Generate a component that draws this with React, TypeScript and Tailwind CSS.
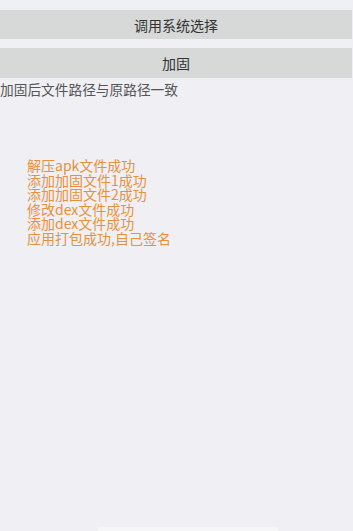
import React from "react";

const logs = [
  "解压apk文件成功",
  "添加加固文件1成功",
  "添加加固文件2成功",
  "修改dex文件成功",
  "添加dex文件成功",
  "应用打包成功,自己签名",
];

const App = () => {
  return (
    <div
      className="relative w-[353px] h-[531px] overflow-hidden bg-[#efeff4]"
      style={{ fontFamily: '"Noto Sans CJK SC", "Noto Sans", sans-serif' }}
    >
      {/* buttons */}
      <div className="flex flex-col gap-[9px] pt-[10px] pr-[1px]">
        <button className="h-[29px] w-full bg-[#d7d8d8] text-[14px] text-[#333] leading-none">
          调用系统选择
        </button>
        <button className="h-[30px] w-full bg-[#d7d8d8] text-[14px] text-[#333] leading-none">
          加固
        </button>
      </div>
      <p className="mt-[2px] text-[13.7px] leading-[18px] text-[#555]">
        加固后文件路径与原路径一致
      </p>

      {/* log output */}
      <div className="mt-[60px] pl-[27px] flex flex-col text-[14px] leading-[14.5px] text-[#e8913c]">
        {logs.map((l) => (
          <span key={l}>{l}</span>
        ))}
      </div>

      <div className="absolute bottom-0 left-[98px] w-[180px] h-[4px] bg-[#f6f6f8]" />
    </div>
  );
};

export default App;
